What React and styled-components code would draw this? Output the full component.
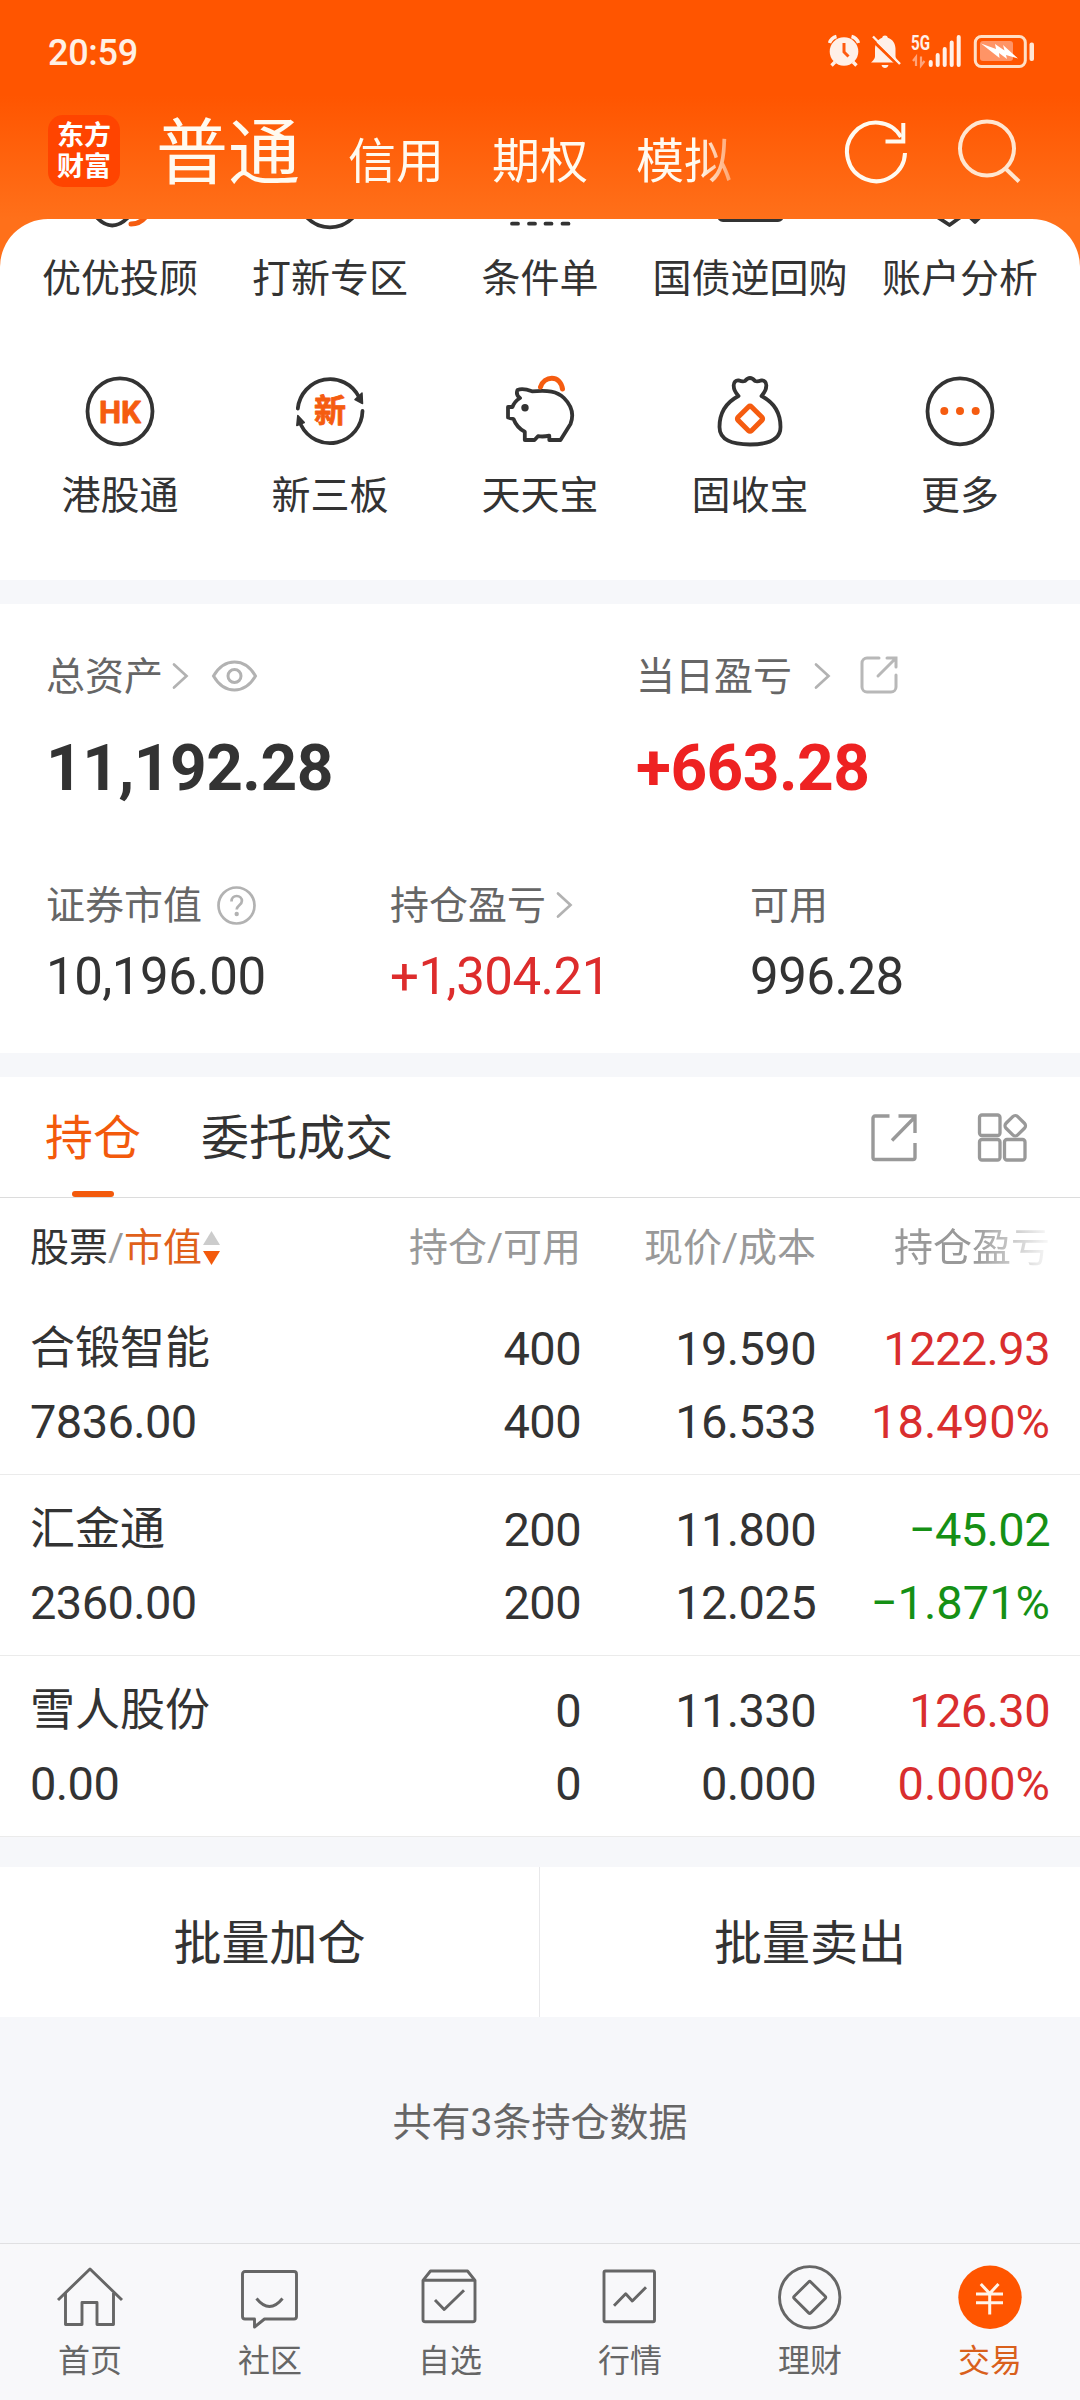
import React from 'react';
import styled, { createGlobalStyle } from 'styled-components';

const GlobalStyle = createGlobalStyle`
  * {
    box-sizing: border-box;
  }
  body {
    margin: 0;
    background: #f6f7fa;
    font-family: Roboto, 'Noto Sans CJK SC', sans-serif;
    color: #333;
  }
  svg {
    display: block;
    flex: none;
    overflow: visible;
  }
`;

const Screen = styled.div`
  display: flex;
  flex-direction: column;
  width: 1080px;
  height: 2400px;
  overflow: hidden;
  background: #f6f7fa;
`;

const Top = styled.div`
  background: linear-gradient(#ff5500 95px, #ff701a 219px);
`;

const StatusBar = styled.div`
  display: flex;
  align-items: center;
  justify-content: space-between;
  height: 104px;
  padding: 0 45px 0 48px;
`;

const Clock = styled.span`
  font-size: 36px;
  font-weight: 500;
  line-height: 44px;
  letter-spacing: -0.3px;
  padding-top: 1px;
  color: #fff0e4;
`;

const Header = styled.div`
  display: flex;
  align-items: center;
  height: 115px;
  padding: 0 58px 20px 48px;
`;

const Logo = styled.div`
  display: flex;
  flex-direction: column;
  align-items: center;
  justify-content: center;
  width: 72px;
  height: 72px;
  margin: 0 36px 1px 0;
  padding-top: 2px;
  border-radius: 15px;
  background: #ff4400;
  color: #fff;
  font-size: 27px;
  font-weight: 700;
  line-height: 31px;
`;

const AccountTabs = styled.div`
  display: flex;
  align-items: baseline;
  gap: 48px;
  width: 620px;
  margin-right: 69px;
  padding-top: 12px;
  overflow: hidden;
  line-height: 92px;
  white-space: nowrap;
  mask-image: linear-gradient(90deg, #000 543px, transparent 598px);
`;

const AccountTab = styled.span`
  font-size: ${(props) => (props.$active ? 72 : 48)}px;
  color: #fffaf0;
`;

const HeaderActions = styled.div`
  display: flex;
  align-items: center;
  gap: 51px;
`;

const Panel = styled.div`
  height: 361px;
  overflow: hidden;
  border-radius: 48px 48px 0 0;
  background: #fff;
`;

const ShortcutGrid = styled.div`
  display: grid;
  grid-template-columns: repeat(5, 210px);
  row-gap: 65px;
  margin: -67px 15px 0;
`;

const Shortcut = styled.div`
  display: flex;
  flex-direction: column;
  align-items: center;
  gap: 20px;
  font-size: 39px;
  line-height: 47px;
  height: 152px;
  white-space: nowrap;
`;

const Card = styled.div`
  margin-top: 24px;
  background: #fff;
`;

const AssetCard = styled(Card)`
  height: 449px;
  padding: 49px 46px 0;
`;

const AssetRow = styled.div`
  display: grid;
  grid-template-columns: ${(props) => props.$columns};
  margin-bottom: 75px;
`;

const AssetLabel = styled.div`
  display: flex;
  align-items: center;
  height: 48px;
  font-size: 39px;
  line-height: 48px;
  color: #666;
`;

const LabelIcon = styled.span`
  margin-left: ${(props) => props.$gap}px;
`;

const TotalValue = styled.div`
  margin-top: 30px;
  font-size: 64px;
  font-weight: 700;
  line-height: 76px;
  letter-spacing: -0.5px;
  color: ${(props) => (props.$up ? '#ee2222' : '#333')};
`;

const AssetValue = styled.div`
  margin-top: 17px;
  font-size: 51px;
  line-height: 60px;
  letter-spacing: -0.5px;
  color: ${(props) => (props.$up ? '#dd2c2c' : '#333')};
`;

const HoldingTabs = styled.div`
  display: flex;
  height: 121px;
  padding: 0 53px 0 45px;
  border-bottom: 1px solid #dcdcdc;
`;

const HoldingTab = styled.div`
  display: flex;
  flex-direction: column;
  align-items: center;
  justify-content: space-between;
  margin-right: 60px;
  padding-top: 32px;
  font-size: 48px;
  line-height: 60px;
  color: ${(props) => (props.$active ? '#f35a0c' : '#333')};
`;

const TabIndicator = styled.div`
  width: 42px;
  height: 6px;
  border-radius: 3px;
  background: #f35a0c;
`;

const TabActions = styled.div`
  display: flex;
  align-items: center;
  gap: 61px;
  margin-left: auto;
`;

const TableRow = styled.div`
  display: grid;
  grid-template-columns: 300px 251px 235px 234px;
  height: 181px;
  padding: 18px 30px 0;
  border-bottom: 1px solid #ebebeb;
  font-size: 47px;
  line-height: 73px;
`;

const TableHead = styled(TableRow)`
  height: 96px;
  padding-top: 26px;
  border-bottom: none;
  font-size: 39px;
  line-height: 48px;
  color: #999;
`;

const HeadCell = styled.div`
  text-align: right;
  mask-image: ${(props) =>
    props.$faded ? 'linear-gradient(90deg, #000 158px, transparent 238px)' : 'none'};
`;

const SortCell = styled.div`
  display: flex;
  align-items: center;
  height: 48px;
  white-space: pre;
`;

const SortDark = styled.span`
  color: #333;
`;

const SortActive = styled.span`
  margin-right: 1px;
  color: #e0601a;
`;

const rowColors = { up: '#d92e2e', down: '#159015' };

const Cell = styled.div`
  text-align: right;
  color: ${(props) => rowColors[props.$trend] || '#333'};
`;

const Figure = styled.div`
  letter-spacing: ${(props) => (props.$percent ? 0 : -0.6)}px;
`;

const NameCell = styled.div`
  white-space: nowrap;
`;

const StockName = styled.div`
  font-size: 45px;
`;

const BatchActions = styled.div`
  display: grid;
  grid-template: 150px / 539px 541px;
  margin-top: 30px;
  background: #fff;
`;

const BatchButton = styled.div`
  display: flex;
  align-items: center;
  justify-content: center;
  padding-top: 3px;
  font-size: 48px;
  line-height: 60px;

  & + & {
    border-left: 1px solid #e8e8ea;
  }
`;

const Summary = styled.div`
  flex: 1;
  padding-top: 82px;
  font-size: 39px;
  line-height: 48px;
  text-align: center;
  color: #666;
`;

const NavBar = styled.div`
  display: flex;
  height: 157px;
  border-top: 1px solid #e0e0e2;
  background: #f8f8fa;
`;

const NavItem = styled.div`
  display: flex;
  flex: 1;
  flex-direction: column;
  align-items: center;
  gap: 12px;
  padding-top: 21px;
  font-size: 32px;
  line-height: 40px;
  color: ${(props) => (props.$active ? '#d9601c' : '#666')};
`;

const StatusIcons = () => (
  <svg width="207" height="34" viewBox="828 36 207 34" fill="#fff0e8">
    {/* alarm */}
    <circle cx="844" cy="52.5" r="14.3" />
    <path
      d="M829.5 44a10 10 0 0 1 7-6.5M858.5 44a10 10 0 0 0-7-6.5M835 63l-3.5 3.5M853 63l3.5 3.5"
      stroke="#fff0e8"
      strokeWidth="3.4"
      fill="none"
    />
    <path d="M844 44v9l4.5 4.5" stroke="#ff5a10" strokeWidth="3" fill="none" />
    {/* muted bell */}
    <path d="M885 36.5c1.5 0 2.5.8 2.8 2.3 5 1.6 7.7 6 7.7 11v7c0 2 .8 3.6 4 6.7h-28.5c3.5-3 4-4.700 4-6.700v-7c0-5 2.600-9.400 7.200-11 .3-1.500 1.300-2.300 2.800-2.300z" />
    <path d="M881.5 66h7c-.5 2-1.8 3-3.5 3s-3-1-3.5-3z" />
    <path d="M871 40l28 27" stroke="#ff5500" strokeWidth="3" />
    <path d="M873 37.5l27 27.5" stroke="#fff0e8" strokeWidth="2.4" />
    <text
      x="911"
      y="50.5"
      fontFamily="Roboto, sans-serif"
      fontSize="20"
      fontWeight="700"
      textLength="19"
      lengthAdjust="spacingAndGlyphs"
    >
      5G
    </text>
    <path
      d="M916 67v-9l-3 4M921 57.5v9l3.5-4.5"
      stroke="#ffa47a"
      strokeWidth="2.2"
      fill="none"
    />
    <path
      d="M930.7 63v3M937.7 56v10M944.7 50v16M951.7 43.5v22.5M958.7 38v28"
      stroke="#fff0e8"
      strokeWidth="4"
      strokeLinecap="round"
    />
    {/* battery */}
    <rect
      x="975.3"
      y="37.5"
      width="50"
      height="30"
      rx="6"
      fill="none"
      stroke="#ffdfc6"
      strokeWidth="3"
    />
    <rect x="980" y="42" width="33" height="20" rx="3" fill="#ff9466" />
    <path d="M981 44.5l15 5.5-1-5 9.5 6.5-1.5-5.5 15 13.5-12-3.5 1 4-8-6 .5 5z" fill="#fff" />
    <rect x="1029.5" y="43.5" width="4.5" height="18.5" rx="2" fill="#ffe6d4" />
  </svg>
);

const RefreshIcon = () => (
  <svg width="62" height="62" viewBox="0 0 62 62" fill="none" stroke="#fffaf0" strokeWidth="4">
    <path d="M60 32A29 29.3 0 1 1 56 16" />
    <path d="M58.3 2v18.5H40.5" />
  </svg>
);

const SearchIcon = () => (
  <svg width="64" height="64" viewBox="0 1 64 64" fill="none" stroke="#ffe6d0" strokeWidth="4">
    <circle cx="29" cy="29.5" r="27" />
    <path d="M47.5 49.5L61 62.5" />
  </svg>
);

const Chevron = ({ gap }) => (
  <LabelIcon $gap={gap}>
    <svg
      width="16"
      height="26"
      viewBox="0 1 16 26"
      fill="none"
      stroke="#b2b2b2"
      strokeWidth="2.7"
      strokeLinecap="round"
    >
      <path d="M2 1.5L14.5 13 2 24.5" />
    </svg>
  </LabelIcon>
);

const EyeIcon = () => (
  <svg width="45" height="32" viewBox="0 1 45 32" fill="none" stroke="#b2b2b2" strokeWidth="3">
    <path d="M1.5 16C7 6.5 14 2 22.5 2S38 6.5 43.5 16C38 25.5 31 30 22.5 30S7 25.5 1.5 16z" />
    <circle cx="22.5" cy="16" r="6.5" />
  </svg>
);

const HelpIcon = () => (
  <svg width="39" height="39" viewBox="0 1 39 39" fill="none" stroke="#b2b2b2" strokeWidth="2.7">
    <circle cx="19.5" cy="19.5" r="18" />
    <path d="M14.5 15.5c0-3.5 2.2-5.5 5.2-5.5s5.2 2 5.2 4.9c0 4.3-5.2 4.3-5.2 8.6" />
    <circle cx="19.7" cy="28" r="2.2" fill="#b2b2b2" stroke="none" />
  </svg>
);

const RoundShareIcon = () => (
  <svg
    width="38"
    height="38"
    viewBox="0 2 38 38"
    fill="none"
    stroke="#b8b8b8"
    strokeWidth="3"
    strokeLinecap="round"
  >
    <path d="M19 2H7a5 5 0 0 0-5 5v24a5 5 0 0 0 5 5h24a5 5 0 0 0 5-5V19" />
    <path d="M18 20L35 3M27 2h9v9" />
  </svg>
);

const ShareIcon = () => (
  <svg width="46" height="47" viewBox="0 0 46 47" fill="none" stroke="#999" strokeWidth="3.4">
    <path d="M18.5 2H4a2 2 0 0 0-2 2v39.5a2 2 0 0 0 2 2h38a2 2 0 0 0 2-2V29" />
    <path d="M27.5 2H44v17M21 26.5L44 3" />
  </svg>
);

const WidgetsIcon = () => (
  <svg width="49" height="49" viewBox="0 0 49 49" fill="none" stroke="#999" strokeWidth="3.3">
    <rect x="1.5" y="2" width="20.5" height="20.5" rx="2.5" />
    <rect x="1.5" y="26.5" width="20.5" height="20.5" rx="2.5" />
    <rect x="26.5" y="26.5" width="20.5" height="20.5" rx="2.5" />
    <rect x="29" y="4.5" width="16.5" height="16.5" rx="3.5" transform="rotate(45 37.25 12.75)" />
  </svg>
);

const SortIcon = () => (
  <svg width="17" height="36" viewBox="0 0 17 36">
    <path d="M8.5 1L17 15H0z" fill="#ccc" />
    <path d="M8.5 35L0 21h17z" fill="#f35a0c" />
  </svg>
);

const dark = '#333';
const orange = '#f55c10';

const Ring = () => <ellipse cx="42" cy="42.3" rx="32.5" ry="33" />;

const shortcutArt = {
  advisor: (
    <>
      <path d="M15 61Q34 86 54 61" />
      <path d="M53 72Q63 72 69 63" stroke={orange} strokeWidth="5" />
    </>
  ),
  ipo: <Ring />,
  condition: <path d="M14 71.7h6M31 71.7h6M47.5 71.7h6M64.5 71.7h6" />,
  bond: <path d="M11 60v4a4 4 0 0 0 4 4h55a4 4 0 0 0 4-4v-4" />,
  analysis: <path d="M20 65.5l11.5 7.5L42 65.5M52 65l5 5 6-6" />,
  hk: (
    <>
      <Ring />
      <text
        x="42"
        y="53.5"
        textAnchor="middle"
        fontFamily="Roboto, sans-serif"
        fontSize="32"
        fontWeight="700"
        textLength="42"
        lengthAdjust="spacingAndGlyphs"
        fill={orange}
        stroke={orange}
        strokeWidth="0.8"
      >
        HK
      </text>
    </>
  ),
  neeq: (
    <>
      <path d="M9.8 39.5A32.5 33 0 0 1 71 28" />
      <path d="M74.5 42A32.5 33 0 0 1 13 56" />
      <path d="M67 30.5l7-6.5.5 10.5zM9.8 46.5l6.5 7-7.5 3z" fill={dark} strokeWidth="1.5" />
      <text
        x="42"
        y="53"
        textAnchor="middle"
        fontFamily="'Noto Sans CJK SC', sans-serif"
        fontSize="32"
        fontWeight="700"
        fill={orange}
        stroke={orange}
        strokeWidth="0.8"
      >
        新
      </text>
    </>
  ),
  piggy: (
    <>
      <path d="M19.5 21C24 19 28 20 34 22.3 50 21 59 22 66 29c8 8 10 17 6.5 26L62.5 71H51.3v-4.3Q45.5 68 40 67.2L36.5 71h-9.7v-8.3Q19 59 15.5 50L10 48.5V38h4.5q1.5-5 7.5-9-4.5-3-2.5-8z" />
      <circle cx="27" cy="38.7" r="3.7" fill={dark} stroke="none" />
      <path d="M42.5 18C46 7 62 5 64.5 20" stroke={orange} strokeWidth="5" />
    </>
  ),
  bag: (
    <>
      <path d="M30.5 27C24 20 24 10.5 31 11.5q3.5 1.3 6 .5 5-6 10 0 2.5.8 6-.5C60 10.5 60 20 53.5 27 65 33 72.5 43 72.5 58 72.5 71 60 75.5 42 75.5S11.5 71 11.5 58C11.5 43 19 33 30.5 27z" />
      <rect
        x="32.5"
        y="40.2"
        width="19"
        height="19"
        rx="2"
        transform="rotate(45 42 49.7)"
        stroke={orange}
        strokeWidth="5"
      />
    </>
  ),
  more: (
    <>
      <Ring />
      <g fill={orange} stroke="none">
        <circle cx="26.3" cy="42" r="4" />
        <circle cx="42" cy="42" r="4" />
        <circle cx="57.7" cy="42" r="4" />
      </g>
    </>
  ),
};

const ShortcutIcon = ({ name }) => (
  <svg
    width="84"
    height="84"
    viewBox="0 0 84 84"
    fill="none"
    stroke={dark}
    strokeWidth="3.8"
    strokeLinecap="round"
    strokeLinejoin="round"
  >
    {shortcutArt[name]}
  </svg>
);

const navArt = {
  home: (
    <>
      <path d="M0 35L32 4l32 31" />
      <path d="M7.5 28v31.5H24v-22h15v22h16.5V28" />
    </>
  ),
  community: (
    <>
      <path d="M16.5 54H7a2.5 2.5 0 0 1-2.5-2.5V9A2.5 2.5 0 0 1 7 6.5h49A2.5 2.5 0 0 1 58.5 9v42.5A2.5 2.5 0 0 1 56 54H26.5l-10 8z" />
      <path d="M18.5 33.5q13 16 26 0" />
    </>
  ),
  watchlist: (
    <>
      <path d="M5 15.3L12.5 6h37L57 15.3V54.5a2.3 2.3 0 0 1-2.3 2.3H7.3A2.3 2.3 0 0 1 5 54.5zM5 15.3h52" />
      <path d="M17 35l9.2 9.5L46 25.3" />
    </>
  ),
  market: (
    <>
      <rect x="6" y="6" width="50.5" height="50.8" rx="1.5" />
      <path d="M16 40.7l11.7-12 6.6 7.3L48 22.3" />
    </>
  ),
  wealth: (
    <>
      <ellipse cx="31.7" cy="32.3" rx="30.2" ry="30.7" />
      <rect x="20" y="20.7" width="23.4" height="23.4" rx="1.5" transform="rotate(45 31.7 32.4)" />
    </>
  ),
  trade: (
    <>
      <circle cx="32" cy="32.3" r="31.7" fill="#ff5500" stroke="none" />
      <path
        d="M22.8 19l8.9 9.5L40.5 19M18 29h27M18 37.7h27M31.7 28.5v21"
        stroke="#fff4e8"
        strokeWidth="3"
      />
    </>
  ),
};

const NavIcon = ({ name }) => (
  <svg
    width="64"
    height="64"
    viewBox="0 0 64 64"
    fill="none"
    stroke="#666"
    strokeWidth="2.9"
    strokeLinejoin="round"
  >
    {navArt[name]}
  </svg>
);

const shortcuts = [
  { icon: 'advisor', label: '优优投顾' },
  { icon: 'ipo', label: '打新专区' },
  { icon: 'condition', label: '条件单' },
  { icon: 'bond', label: '国债逆回购' },
  { icon: 'analysis', label: '账户分析' },
  { icon: 'hk', label: '港股通' },
  { icon: 'neeq', label: '新三板' },
  { icon: 'piggy', label: '天天宝' },
  { icon: 'bag', label: '固收宝' },
  { icon: 'more', label: '更多' },
];

const holdings = [
  {
    name: '合锻智能',
    value: '7836.00',
    amount: ['400', '400'],
    price: ['19.590', '16.533'],
    profit: ['1222.93', '18.490%'],
    trend: 'up',
  },
  {
    name: '汇金通',
    value: '2360.00',
    amount: ['200', '200'],
    price: ['11.800', '12.025'],
    profit: ['−45.02', '−1.871%'],
    trend: 'down',
  },
  {
    name: '雪人股份',
    value: '0.00',
    amount: ['0', '0'],
    price: ['11.330', '0.000'],
    profit: ['126.30', '0.000%'],
    trend: 'up',
  },
];

const navItems = [
  { icon: 'home', label: '首页' },
  { icon: 'community', label: '社区' },
  { icon: 'watchlist', label: '自选' },
  { icon: 'market', label: '行情' },
  { icon: 'wealth', label: '理财' },
  { icon: 'trade', label: '交易', active: true },
];

const PairCell = ({ values, trend }) => (
  <Cell $trend={trend}>
    {values.map((value, i) => (
      <Figure key={i} $percent={value.endsWith('%')}>
        {value}
      </Figure>
    ))}
  </Cell>
);

const HoldingRow = ({ holding }) => (
  <TableRow>
    <NameCell>
      <StockName>{holding.name}</StockName>
      <Figure>{holding.value}</Figure>
    </NameCell>
    <PairCell values={holding.amount} />
    <PairCell values={holding.price} />
    <PairCell values={holding.profit} trend={holding.trend} />
  </TableRow>
);

const Assets = () => (
  <AssetCard>
    <AssetRow $columns="590px 1fr">
      <div>
        <AssetLabel>
          总资产
          <Chevron gap={9} />
          <LabelIcon $gap={24}>
            <EyeIcon />
          </LabelIcon>
        </AssetLabel>
        <TotalValue>11,192.28</TotalValue>
      </div>
      <div>
        <AssetLabel>
          当日盈亏
          <Chevron gap={22} />
          <LabelIcon $gap={30}>
            <RoundShareIcon />
          </LabelIcon>
        </AssetLabel>
        <TotalValue $up>+663.28</TotalValue>
      </div>
    </AssetRow>
    <AssetRow $columns="344px 360px 1fr">
      <div>
        <AssetLabel>
          证券市值
          <LabelIcon $gap={15}>
            <HelpIcon />
          </LabelIcon>
        </AssetLabel>
        <AssetValue>10,196.00</AssetValue>
      </div>
      <div>
        <AssetLabel>
          持仓盈亏
          <Chevron gap={10} />
        </AssetLabel>
        <AssetValue $up>+1,304.21</AssetValue>
      </div>
      <div>
        <AssetLabel>可用</AssetLabel>
        <AssetValue>996.28</AssetValue>
      </div>
    </AssetRow>
  </AssetCard>
);

const Holdings = () => (
  <Card>
    <HoldingTabs>
      <HoldingTab $active>
        持仓
        <TabIndicator />
      </HoldingTab>
      <HoldingTab>委托成交</HoldingTab>
      <TabActions>
        <ShareIcon />
        <WidgetsIcon />
      </TabActions>
    </HoldingTabs>
    <TableHead>
      <SortCell>
        <SortDark>股票</SortDark>/<SortActive>市值</SortActive>
        <SortIcon />
      </SortCell>
      <HeadCell>持仓/可用</HeadCell>
      <HeadCell>现价/成本</HeadCell>
      <HeadCell $faded>持仓盈亏</HeadCell>
    </TableHead>
    {holdings.map((holding) => (
      <HoldingRow key={holding.name} holding={holding} />
    ))}
  </Card>
);

export default function App() {
  return (
    <Screen>
      <GlobalStyle />
      <Top>
        <StatusBar>
          <Clock>20:59</Clock>
          <StatusIcons />
        </StatusBar>
        <Header>
          <Logo>
            <span>东方</span>
            <span>财富</span>
          </Logo>
          <AccountTabs>
            <AccountTab $active>普通</AccountTab>
            <AccountTab>信用</AccountTab>
            <AccountTab>期权</AccountTab>
            <AccountTab>模拟</AccountTab>
          </AccountTabs>
          <HeaderActions>
            <RefreshIcon />
            <SearchIcon />
          </HeaderActions>
        </Header>
        <Panel>
          <ShortcutGrid>
            {shortcuts.map(({ icon, label }) => (
              <Shortcut key={icon}>
                <ShortcutIcon name={icon} />
                {label}
              </Shortcut>
            ))}
          </ShortcutGrid>
        </Panel>
      </Top>
      <Assets />
      <Holdings />
      <BatchActions>
        <BatchButton>批量加仓</BatchButton>
        <BatchButton>批量卖出</BatchButton>
      </BatchActions>
      <Summary>共有3条持仓数据</Summary>
      <NavBar>
        {navItems.map(({ icon, label, active }) => (
          <NavItem key={icon} $active={active}>
            <NavIcon name={icon} />
            {label}
          </NavItem>
        ))}
      </NavBar>
    </Screen>
  );
}
